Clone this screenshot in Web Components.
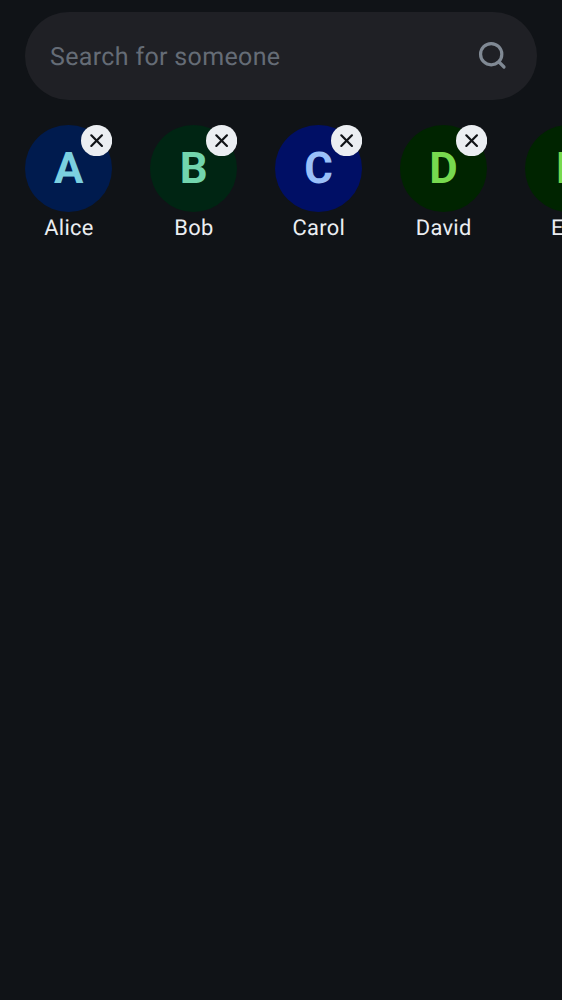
<!DOCTYPE html>
<html lang="en">
<head>
<meta charset="utf-8">
<title>People search</title>
<style>
html,body{margin:0;height:100%;background:#101317;overflow:hidden}
body{font-family:Roboto,sans-serif;text-rendering:geometricPrecision}
</style>
</head>
<body>
<people-screen></people-screen>
<script>
class SearchField extends HTMLElement {
  constructor() {
    super();
    this.attachShadow({ mode: 'open' }).innerHTML = `
      <style>
        :host{display:flex;align-items:center;justify-content:space-between;box-sizing:border-box;height:88px;padding:0 26px 0 25px;border-radius:44px;background:#1f2025;color:#656c76;font-size:25px;line-height:38px;letter-spacing:.34px}
        span{padding-top:3px}
        svg{display:block;width:37.5px;height:37.5px}
      </style>
      <span><slot></slot></span>
      <svg viewBox="0 0 24 24" fill="none" stroke="#808994" stroke-width="2.05" stroke-linecap="round"><circle cx="11" cy="11" r="6.8"/><path d="M16 16L19.2 19.2"/></svg>`;
  }
}
customElements.define('search-field', SearchField);

class SelectedUser extends HTMLElement {
  constructor() {
    super();
    this.attachShadow({ mode: 'open' }).innerHTML = `
      <style>
        :host{display:flex;flex-direction:column;align-items:center;flex:0 0 87.4px;width:87.4px}
        .avatar{position:relative;display:flex;align-items:center;justify-content:center;box-sizing:border-box;width:87.4px;height:87.4px;padding-top:1px;border-radius:50%;background:var(--bg);color:var(--fg);font-size:43.75px;font-weight:700;line-height:1}
        .remove{position:absolute;top:0;right:-.1px;width:31.25px;height:31.25px}
        .name{color:#ebeef2;font-size:21.875px;line-height:34px;letter-spacing:.3px;padding-left:.6px;white-space:nowrap}
      </style>
      <div class="avatar"><slot name="initial"></slot>
        <svg class="remove" viewBox="0 0 31.25 31.25"><circle cx="15.625" cy="15.625" r="15.625" fill="#ebeef2"/><path d="M10.3 10.3L20.95 20.95M20.95 10.3L10.3 20.95" stroke="#101317" stroke-width="2.2" stroke-linecap="round"/></svg>
      </div>
      <div class="name"><slot></slot></div>`;
  }
}
customElements.define('selected-user', SelectedUser);

class PeopleScreen extends HTMLElement {
  constructor() {
    super();
    this.attachShadow({ mode: 'open' }).innerHTML = `
      <style>
        :host{display:flex;flex-direction:column;gap:25px;box-sizing:border-box;height:100vh;padding:12px 25px;overflow:hidden}
        .users{display:flex;gap:37.5px;margin-right:-25px;overflow:hidden}
      </style>
      <search-field>Search for someone</search-field>
      <div class="users">
        <selected-user style="--bg:#001b4e;--fg:#7bd0e0"><span slot="initial">A</span>Alice</selected-user>
        <selected-user style="--bg:#002513;--fg:#72d5ae"><span slot="initial">B</span>Bob</selected-user>
        <selected-user style="--bg:#000f65;--fg:#9ac0f8"><span slot="initial">C</span>Carol</selected-user>
        <selected-user style="--bg:#002400;--fg:#77d94f"><span slot="initial">D</span>David</selected-user>
        <selected-user style="--bg:#002400;--fg:#77d94f"><span slot="initial">E</span>Eve</selected-user>
      </div>`;
  }
}
customElements.define('people-screen', PeopleScreen);
</script>
</body>
</html>
